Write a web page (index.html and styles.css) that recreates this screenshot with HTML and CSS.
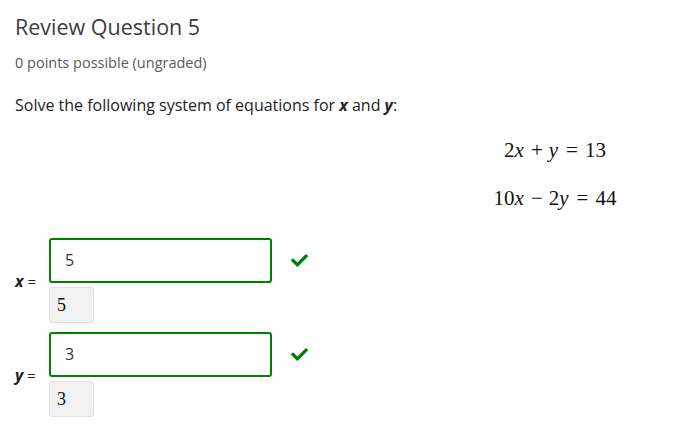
FILE: index.html
```html
<!DOCTYPE html>
<html>
<head>
<meta charset="utf-8">
<link rel="stylesheet" href="styles.css">
</head>
<body>
<div class="problem">
  <h2 class="title">Review Question 5</h2>
  <div class="points">0 points possible (ungraded)</div>
  <p class="prompt">Solve the following system of equations for <b><i>x</i></b> and <b><i>y</i></b>:</p>
  <div class="equations">
    <div class="eq"><span>2</span><i>x</i><span class="bin">+</span><i>y</i><span class="rel">=</span><span>13</span></div>
    <div class="eq"><span>10</span><i>x</i><span class="bin">−</span><span>2</span><i>y</i><span class="rel">=</span><span>44</span></div>
  </div>
  <div class="answers">
    <div class="answer">
      <label class="var"><b><i>x</i></b> =</label>
      <div class="field">
        <div class="inputrow">
          <div class="input">5</div>
          <svg class="check" width="17" height="13" viewBox="0 64 512 384"><path fill="#008000" d="M173.898 439.404l-166.4-166.4c-9.997-9.997-9.997-26.206 0-36.204l36.203-36.204c9.997-9.998 26.207-9.998 36.204 0L192 312.69 432.095 72.596c9.997-9.997 26.207-9.997 36.204 0l36.203 36.204c9.997 9.997 9.997 26.206 0 36.204l-294.4 294.401c-9.998 9.997-26.207 9.997-36.204-.001z"/></svg>
        </div>
        <div class="preview">5</div>
      </div>
    </div>
    <div class="answer">
      <label class="var"><b><i>y</i></b> =</label>
      <div class="field">
        <div class="inputrow">
          <div class="input">3</div>
          <svg class="check" width="17" height="13" viewBox="0 64 512 384"><path fill="#008000" d="M173.898 439.404l-166.4-166.4c-9.997-9.997-9.997-26.206 0-36.204l36.203-36.204c9.997-9.998 26.207-9.998 36.204 0L192 312.69 432.095 72.596c9.997-9.997 26.207-9.997 36.204 0l36.203 36.204c9.997 9.997 9.997 26.206 0 36.204l-294.4 294.401c-9.998 9.997-26.207 9.997-36.204-.001z"/></svg>
        </div>
        <div class="preview">3</div>
      </div>
    </div>
  </div>
</div>
</body>
</html>
```
FILE: styles.css
```css
html, body {
  margin: 0;
  padding: 0;
  background: #fff;
  overflow: hidden;
}
body {
  font-family: "Open Sans", "Liberation Sans", sans-serif;
  color: #313131;
}
.problem {
  padding: 12px 15px 0 15px;
}
.title {
  margin: 0;
  font-size: 21.5px;
  font-weight: 400;
  line-height: 30px;
  color: #3c3c3c;
}
.points {
  margin-top: 12px;
  font-size: 14.5px;
  line-height: 18px;
  color: #5a5a5a;
}
.prompt {
  margin: 23px 0 0 0;
  font-size: 16px;
  line-height: 20px;
  color: #222;
}
.equations {
  padding-left: 419px;
  display: flex;
  flex-direction: column;
  align-items: center;
  margin-top: 25px;
  gap: 28px;
  font-family: "Liberation Serif", "Times New Roman", serif;
  font-size: 21px;
  line-height: 20px;
  color: #111;
}
.eq {
  white-space: nowrap;
}
.eq i {
  font-style: italic;
  padding-right: 1px;
}
.eq .bin {
  padding: 0 6px;
}
.eq .rel {
  padding: 0 7px;
}
.answers {
  margin-top: 30px;
  display: flex;
  flex-direction: column;
  gap: 9px;
}
.answer {
  display: flex;
  align-items: center;
}
.var {
  width: 34px;
  font-size: 15px;
  color: #222;
}
.var b {
  font-size: 16px;
}
.field {
  display: flex;
  flex-direction: column;
  gap: 4px;
}
.inputrow {
  display: flex;
  align-items: center;
  gap: 19px;
}
.input {
  width: 205px;
  height: 41px;
  border: 2px solid #008000;
  border-radius: 3px;
  padding: 0 0 0 14px;
  font-size: 16px;
  line-height: 41px;
  color: #333;
}
.check {
  display: block;
}
.preview {
  width: 36px;
  height: 34px;
  padding-left: 7px;
  background: #f1f1f1;
  border: 1px solid #e0e0e0;
  border-radius: 3px;
  font-family: "Liberation Serif", "Times New Roman", serif;
  font-size: 18px;
  line-height: 34px;
  color: #111;
}
```
